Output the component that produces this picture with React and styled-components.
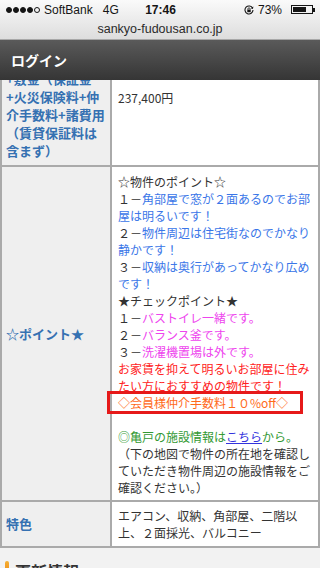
import styled, { createGlobalStyle } from 'styled-components';

const GlobalStyle = createGlobalStyle`
  html, body { margin: 0; padding: 0; }
  body {
    width: 320px;
    height: 568px;
    overflow: hidden;
    background: #f2f2f2;
    font-family: "Noto Sans CJK JP", sans-serif;
  }
`;

const Chrome = styled.header`
  height: 39px;
  border-bottom: 1px solid #a8a8a8;
  background: linear-gradient(#fafafa, #dddddd);
  font-family: "Liberation Sans", Arial, sans-serif;
  color: #151515;
`;

const StatusBar = styled.div`
  height: 19px;
  display: grid;
  grid-template-columns: 1fr auto 1fr;
  align-items: center;
  padding: 0 5px 0 6px;
  font-size: 12px;
`;

const Group = styled.div`
  display: flex;
  align-items: center;
  justify-content: ${(p) => (p.$end ? 'flex-end' : 'flex-start')};
  gap: ${(p) => p.$gap || 0}px;
`;

const Dots = styled.div`
  display: flex;
  gap: 1px;
  margin-right: 4px;
`;

const Dot = styled.span`
  width: 6px;
  height: 6px;
  box-sizing: border-box;
  border-radius: 50%;
  border: 1px solid #151515;
  background: ${(p) => (p.$empty ? 'transparent' : '#151515')};
`;

const Carrier = styled.span`
  margin-right: 10px;
`;

const Time = styled.span`
  font-weight: bold;
`;

const Battery = styled.div`
  display: flex;
  align-items: center;
  margin-left: 5px;
`;

const BatteryBody = styled.div`
  width: 22px;
  height: 9px;
  box-sizing: border-box;
  border: 1px solid #151515;
  padding: 1px;
  display: flex;
`;

const BatteryFill = styled.div`
  background: #151515;
  height: 100%;
`;

const BatteryNub = styled.div`
  width: 2px;
  height: 4px;
  background: #151515;
`;

const UrlRow = styled.div`
  height: 20px;
  display: flex;
  align-items: center;
  justify-content: center;
  font-size: 12.5px;
  color: #2a2a2a;
`;

const TopBar = styled.div`
  height: 40px;
  background: linear-gradient(#5a5a5a, #353535);
  display: flex;
  align-items: center;
  padding-left: 11px;
  color: #fff;
  font-size: 14px;
  font-weight: bold;
`;

const Viewport = styled.main`
  height: 488px;
  overflow: hidden;
`;

const Table = styled.div`
  margin-top: -51px;
`;

const Row = styled.div`
  display: grid;
  grid-template-columns: 112px 208px;
`;

const Label = styled.div`
  box-sizing: border-box;
  background: #efefef;
  border: solid #aaaaaa;
  border-width: 0 2px 2px 2px;
  padding: 5px 4px;
  display: flex;
  align-items: center;
  font-size: 13px;
  font-weight: bold;
  line-height: 18px;
  color: #3571b2;
  white-space: nowrap;
`;

const Value = styled.div`
  box-sizing: border-box;
  background: #fff;
  border: solid #aaaaaa;
  border-width: 0 2px 2px 0;
  padding: ${(p) => p.$pad || '5px 2px 5px 6px'};
  display: flex;
  align-items: center;
  font-size: 12px;
  line-height: 17px;
  color: #333;
`;

const Text = styled.div`
  width: 100%;
`;

const Tone = styled.span`
  color: ${(p) => p.$c};
`;

const Link = styled.span`
  color: #3333dd;
  text-decoration: underline;
`;

const Offer = styled.span`
  color: #ff6a1a;
  border: 3px solid #e61919;
  margin-left: -11px;
  padding: 0 12px 0 8px;
  white-space: nowrap;
`;

const Section = styled.section`
  padding: 12px 0 0 5px;
`;

const SectionTitle = styled.h2`
  margin: 0;
  display: flex;
  align-items: center;
  gap: 6px;
  font-size: 16px;
  line-height: 22px;
  font-weight: bold;
  color: #333;
  &::before {
    content: '';
    width: 4px;
    height: 20px;
    border-radius: 2px 2px 0 0;
    background: linear-gradient(#f6b030, #e8720f);
  }
`;

const BLUE = '#3a76e8';
const PINK = '#ee44ee';
const RED = '#ff2222';
const GREEN = '#339933';

const LockIcon = () => (
  <svg width="10" height="10" viewBox="0 0 10 10">
    <path d="M8.6 3.2A4 4 0 1 0 9 5" fill="none" stroke="#151515" strokeWidth="1.1" />
    <path d="M9.4 1.6L8.9 3.9 6.8 3.2z" fill="#151515" />
    <rect x="3.3" y="4.6" width="3.4" height="2.6" fill="#151515" />
    <path d="M3.9 4.7V3.9a1.1 1.1 0 0 1 2.2 0v0.8" fill="none" stroke="#151515" strokeWidth="0.8" />
  </svg>
);

export default function App() {
  return (
    <>
      <GlobalStyle />
      <Chrome>
        <StatusBar>
          <Group>
            <Dots>
              <Dot />
              <Dot />
              <Dot />
              <Dot />
              <Dot $empty />
            </Dots>
            <Carrier>SoftBank</Carrier>
            <span>4G</span>
          </Group>
          <Time>17:46</Time>
          <Group $end $gap={4}>
            <LockIcon />
            <span>73%</span>
            <Battery>
              <BatteryBody>
                <BatteryFill style={{ width: '73%' }} />
              </BatteryBody>
              <BatteryNub />
            </Battery>
          </Group>
        </StatusBar>
        <UrlRow>sankyo-fudousan.co.jp</UrlRow>
      </Chrome>
      <TopBar>ログイン</TopBar>
      <Viewport>
        <Table>
          <Row>
            <Label>
              <div>
                入居時費用
                <br />
                （前家賃+礼金
                <br />
                +敷金（保証金
                <br />
                +火災保険料+仲
                <br />
                介手数料+諸費用
                <br />
                （賃貸保証料は
                <br />
                含まず）
              </div>
            </Label>
            <Value>
              <Text>237,400円</Text>
            </Value>
          </Row>
          <Row>
            <Label>☆ポイント★</Label>
            <Value $pad="6px 2px 4px 6px">
              <Text>
                ☆物件のポイント☆
                <br />
                １－<Tone $c={BLUE}>角部屋で窓が２面あるのでお部屋は明るいです！</Tone>
                <br />
                ２－<Tone $c={BLUE}>物件周辺は住宅街なのでかなり静かです！</Tone>
                <br />
                ３－<Tone $c={BLUE}>収納は奥行があってかなり広めです！</Tone>
                <br />
                ★チェックポイント★
                <br />
                １－<Tone $c={PINK}>バストイレ一緒です。</Tone>
                <br />
                ２－<Tone $c={PINK}>バランス釜です。</Tone>
                <br />
                ３－<Tone $c={PINK}>洗濯機置場は外です。</Tone>
                <br />
                <Tone $c={RED}>お家賃を抑えて明るいお部屋に住みたい方におすすめの物件です！</Tone>
                <br />
                <Offer>◇会員様仲介手数料１０%off◇</Offer>
                <br />
                <br />
                <Tone $c={GREEN}>
                  ◎亀戸の施設情報は<Link>こちら</Link>から。
                </Tone>
                <br />
                （下の地図で物件の所在地を確認していただき物件周辺の施設情報をご確認ください。）
              </Text>
            </Value>
          </Row>
          <Row>
            <Label>特色</Label>
            <Value>
              <Text>エアコン、収納、角部屋、二階以上、２面採光、バルコニー</Text>
            </Value>
          </Row>
        </Table>
        <Section>
          <SectionTitle>更新情報</SectionTitle>
        </Section>
      </Viewport>
    </>
  );
}
